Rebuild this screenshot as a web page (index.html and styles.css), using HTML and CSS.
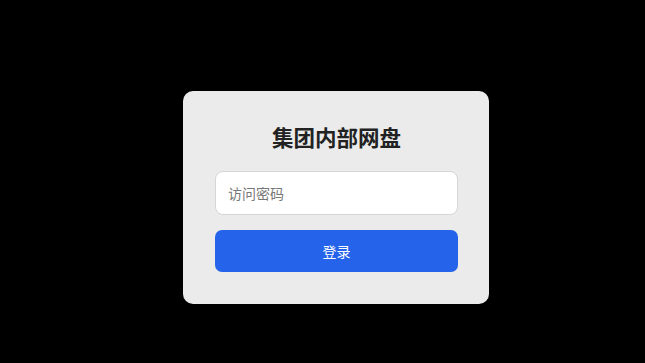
FILE: index.html
```html
<!DOCTYPE html>
<html lang="zh-CN">
<head>
<meta charset="UTF-8">
<meta name="viewport" content="width=device-width, initial-scale=1.0">
<title>集团内部网盘</title>
<link rel="stylesheet" href="styles.css">
</head>
<body>
<div class="login-card">
  <h1>集团内部网盘</h1>
  <input type="password" class="pwd-input" placeholder="访问密码">
  <button class="login-btn">登录</button>
</div>
</body>
</html>
```

FILE: styles.css
```css
html, body {
  margin: 0;
  height: 100%;
}
body {
  font-family: "Noto Sans CJK SC", "Noto Sans", sans-serif;
  background-color: #000;
  display: flex;
  justify-content: center;
  align-items: center;
  box-sizing: border-box;
  padding-left: 27px;
  padding-top: 31px;
}
.login-card {
  width: 306px;
  box-sizing: border-box;
  padding: 32px 31px 32px 32px;
  background-color: #ebebeb;
  border-radius: 10px;
  display: flex;
  flex-direction: column;
}
h1 {
  margin: 0 0 20px;
  font-size: 21.5px;
  line-height: 28px;
  font-weight: bold;
  color: #222;
  text-align: center;
}
.pwd-input {
  height: 44px;
  box-sizing: border-box;
  border: 1px solid #d6d6d6;
  border-radius: 8px;
  background: #fff;
  padding: 0 12px;
  font-family: inherit;
  font-size: 14px;
  color: #333;
  outline: none;
  margin-bottom: 15px;
}
.pwd-input::placeholder {
  color: #777;
}
.login-btn {
  height: 42px;
  border: none;
  border-radius: 7px;
  background-color: #2563eb;
  color: #fff;
  font-family: inherit;
  font-size: 14px;
  cursor: pointer;
}
```
